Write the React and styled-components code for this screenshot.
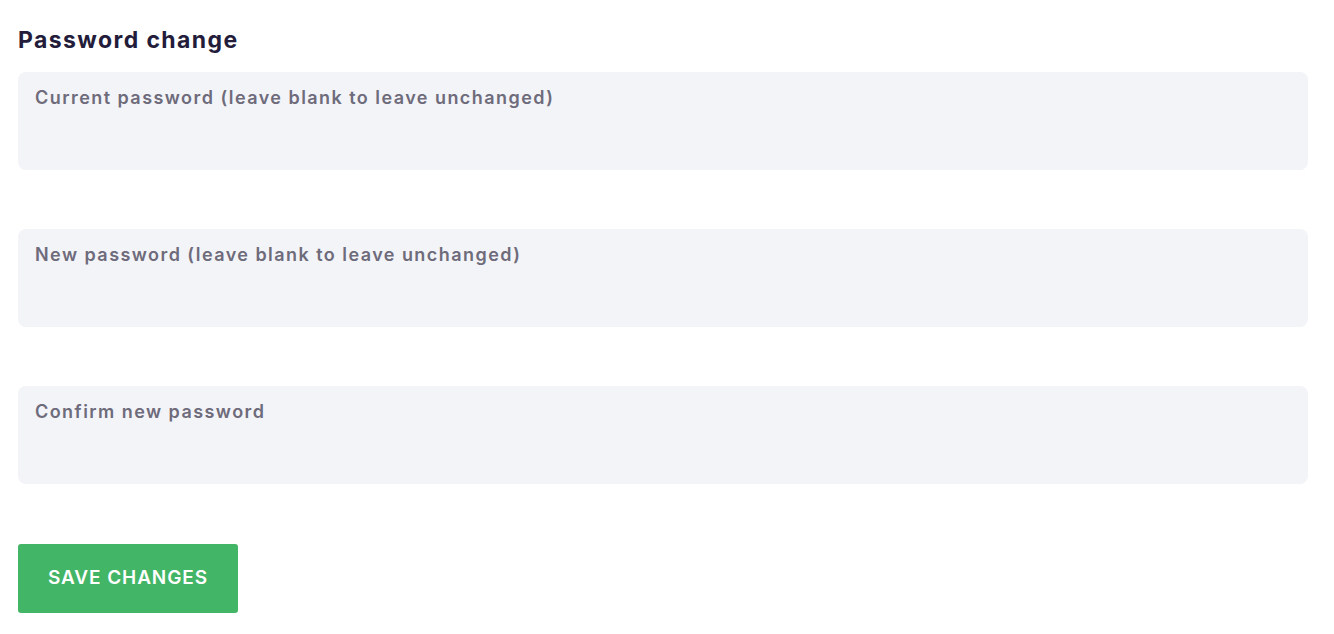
import React from "react";
import styled, { createGlobalStyle } from "styled-components";

const Global = createGlobalStyle`
  html, body { margin: 0; padding: 0; background: #ffffff; }
  body { font-family: Inter, "Open Sans", sans-serif; }
  * { box-sizing: border-box; }
`;

const Page = styled.form`
  padding: 24px 26px 20px 18px;
  display: flex;
  flex-direction: column;
`;

const Title = styled.h2`
  margin: 0 0 16px;
  font-size: 23px;
  line-height: 32px;
  font-weight: 700;
  letter-spacing: 1.4px;
  color: #231c3a;
`;

const Fields = styled.div`
  display: flex;
  flex-direction: column;
  gap: 59px;
`;

const Field = styled.label`
  display: block;
  height: 98px;
  background: #f3f4f8;
  border-radius: 8px;
  padding: 14px 17px;
`;

const Label = styled.span`
  display: block;
  font-size: 18px;
  line-height: 24px;
  font-weight: 600;
  letter-spacing: 1.45px;
  color: #6e6b7b;
`;

const Button = styled.button`
  margin-top: 60px;
  align-self: flex-start;
  width: 220px;
  height: 69px;
  border: none;
  border-radius: 3px;
  background: #42b566;
  color: #ffffff;
  font-family: Inter, "Open Sans", sans-serif;
  font-size: 19px;
  font-weight: 600;
  letter-spacing: 0.9px;
  padding: 0 0 2px;
  cursor: pointer;
`;

const fields = [
  "Current password (leave blank to leave unchanged)",
  "New password (leave blank to leave unchanged)",
  "Confirm new password",
];

export default function App() {
  return (
    <>
      <Global />
      <Page onSubmit={(e) => e.preventDefault()}>
        <Title>Password change</Title>
        <Fields>
          {fields.map((f) => (
            <Field key={f}>
              <Label>{f}</Label>
            </Field>
          ))}
        </Fields>
        <Button type="submit">SAVE CHANGES</Button>
      </Page>
    </>
  );
}
